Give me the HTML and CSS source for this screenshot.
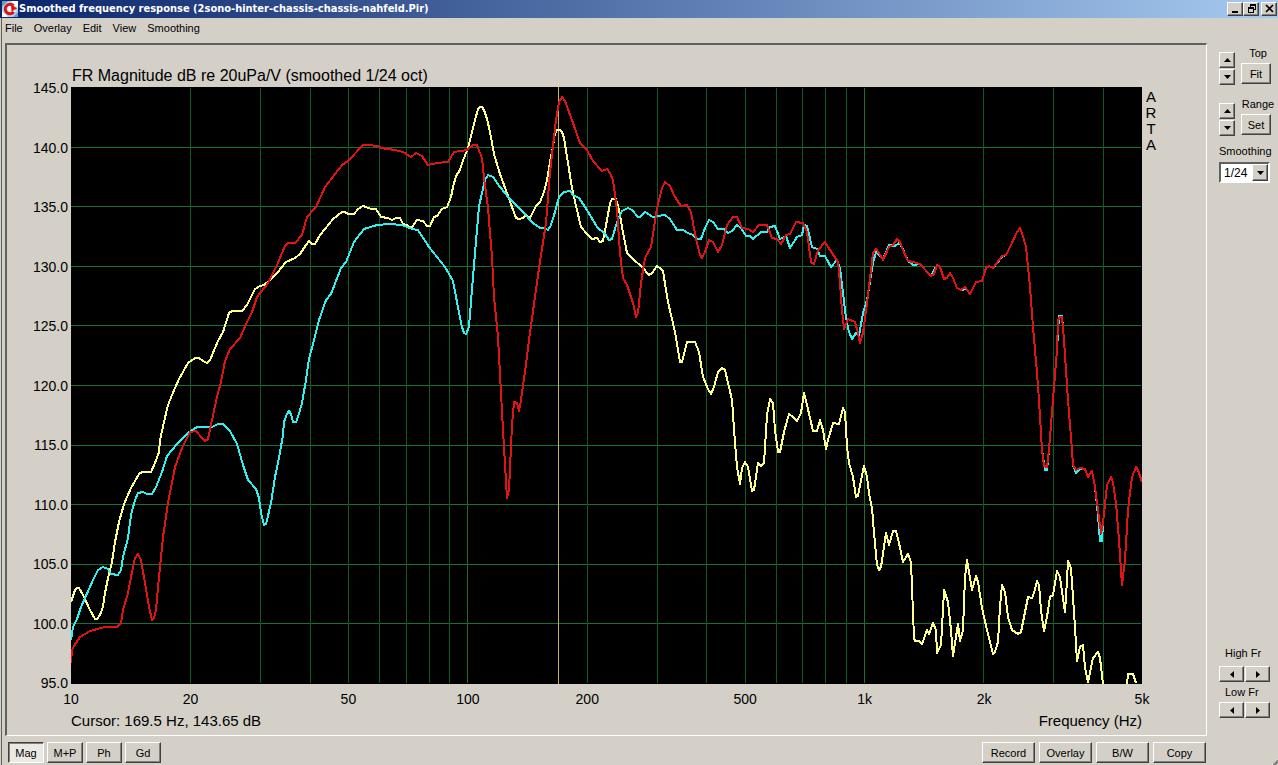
FILE: index.html
```html
<!DOCTYPE html>
<html lang="en">
<head>
<meta charset="utf-8">
<title>Smoothed frequency response</title>
<link rel="stylesheet" href="styles.css">
</head>
<body>
<div class="window">
  <header class="titlebar">
    <svg class="app-icon" viewBox="0 0 16 16" aria-hidden="true">
      <rect width="16" height="16" fill="#b4d4ec"/>
      <path d="M0 0h6L0 6zM16 16h-5l5-5z" fill="#5f9fc8"/>
      <path d="M9 0h7v7zM0 10v6h6z" fill="#fff"/>
      <circle cx="8" cy="8" r="6" fill="#e8eef4"/>
      <path d="M11.500 4.600A4.800 4.800 0 1 0 11.800 11" fill="none" stroke="#d81818" stroke-width="3"/>
      <path d="M9 3l6 4.500-5.500 3z" fill="#d81818"/>
      <path d="M7 6l2 2-2 2z" fill="#fff"/>
    </svg>
    <h1 class="caption">Smoothed frequency response (2sono-hinter-chassis-chassis-nahfeld.Pir)</h1>
    <div class="window-buttons">
      <button class="btn win-btn" aria-label="Minimize"><svg viewBox="0 0 11 10" shape-rendering="crispEdges"><path d="M2 7h6v2H2z"/></svg></button>
      <button class="btn win-btn" aria-label="Restore"><svg viewBox="0 0 11 10" shape-rendering="crispEdges"><path d="M4 0h6v6H8V5h1V2H5v1H4zM2 3h6v6H2zM3 5v3h4V5z" fill-rule="evenodd"/></svg></button>
      <button class="btn win-btn close" aria-label="Close"><svg viewBox="0 0 11 10"><path d="M2 1l7 7M9 1L2 8" stroke="#000" stroke-width="1.700"/></svg></button>
    </div>
  </header>
  <nav class="menu">
    <button>File</button><button>Overlay</button><button>Edit</button><button>View</button><button>Smoothing</button>
  </nav>
  <div class="workspace">
    <main class="left">
      <section class="panel">
        <h2 class="plot-title">FR Magnitude dB re 20uPa/V (smoothed 1/24 oct)</h2>
        <div class="y-axis">
          <span>145.0</span><span>140.0</span><span>135.0</span><span>130.0</span><span>125.0</span><span>120.0</span><span>115.0</span><span>110.0</span><span>105.0</span><span>100.0</span><span>95.0</span>
        </div>
        <div class="plot">
          <svg viewBox="71 87 1071 597" preserveAspectRatio="none" role="img" aria-label="Frequency response curves">
            <g class="grid" shape-rendering="crispEdges">
              <path d="M71 147.500H1141M71 206.500H1141M71 266.500H1141M71 325.500H1141M71 385.500H1141M71 445.500H1141M71 504.500H1141M71 564.500H1141M71 623.500H1141"/>
              <path class="minor" d="M190.500 88V683M260.500 88V683M310.500 88V683M348.500 88V683M379.500 88V683M406.500 88V683M429.500 88V683M449.500 88V683M587.500 88V683M657.500 88V683M706.500 88V683M745.500 88V683M776.500 88V683M802.500 88V683M825.500 88V683M846.500 88V683M983.500 88V683M1053.500 88V683M1103.500 88V683"/>
              <path d="M467.500 88V683M864.500 88V683"/>
            </g>
            <path class="cursor-line" shape-rendering="crispEdges" d="M558.500 87V684"/>
            <g class="curves" shape-rendering="crispEdges">
              <polyline class="yellow" points="71,602 75,590 77,588 79,588 83,595 90,610 95,619 97,619 100,615 103,607 105,593 108,578 112,562 115,542 119,522 124,504 131,488 139,474 142,472 151,472 155,463 159,452 160,440 164,422 168,405 172,395 179,379 188,363 195,358 199,358 203,361 207,363 210,360 218,341 223,332 229,313 232,311 242,311 247,305 255,289 260,286 264,285 270,280 277,273 286,262 295,258 300,254 306,245 309,241 312,244 315,244 320,235 325,229 333,219 342,212 345,212 348,214 354,214 358,209 363,206 366,207 371,209 376,209 381,217 388,218 392,220 396,218 400,218 403,224 407,225 409,227 412,227 417,220 423,221 427,226 430,226 434,217 437,216 442,209 447,207 451,197 453,187 456,176 460,170 462,163 468,148 472,132 475,120 478,109 480,107 482,107 484,110 487,119 490,132 494,154 500,174 508,196 512,207 516,218 519,219 523,218 526,215 530,218 536,206 540,202 544,192 547,180 550,162 553,147 555,133 557,130 560,130 562,132 564,138 568,163 572,188 576,206 581,227 587,234 592,239 597,238 600,242 603,241 607,220 610,203 612,199 616,199 619,210 622,227 627,253 633,259 642,267 649,275 652,273 657,266 661,269 663,271 668,302 675,332 680,362 682,362 687,342 695,342 699,352 703,377 708,389 711,394 714,387 718,372 722,368 725,370 729,387 732,400 735,443 737,467 740,484 742,468 745,462 748,467 752,491 754,490 758,463 761,466 764,463 767,415 770,399 773,403 775,430 778,452 780,452 784,432 789,414 793,417 797,421 801,413 804,393 807,405 813,431 817,431 820,420 823,430 826,449 828,440 833,423 839,424 843,408 845,412 847,447 849,463 853,477 856,497 858,496 861,480 864,466 867,477 869,493 872,508 874,533 877,565 879,570 881,567 886,533 889,545 893,531 896,531 899,543 903,562 908,554 911,562 914,638 915,641 919,641 922,644 927,630 929,634 933,623 936,630 937,653 941,645 943,610 944,590 948,602 951,630 953,656 958,624 960,641 963,630 965,577 967,560 972,590 976,576 978,582 982,608 987,630 993,654 995,652 998,642 1000,607 1002,585 1005,592 1008,617 1012,630 1018,634 1021,632 1023,622 1028,597 1032,598 1034,593 1037,581 1039,585 1041,610 1044,631 1047,617 1050,597 1053,595 1057,571 1060,577 1065,612 1066,597 1068,561 1071,568 1075,627 1077,661 1080,647 1083,645 1085,667 1088,682 1093,658 1098,652 1100,658 1103,684"/>
              <polyline class="yellow" points="1127,684 1128,674 1133,674 1136,683"/>
              <polyline class="cyan" points="71,640 73,627 77,619 81,607 93,580 98,570 103,567 108,569 111,574 118,575 121,570 123,557 128,538 131,515 135,500 138,493 143,492 147,494 152,494 156,487 162,472 167,456 177,444 188,433 197,427 212,427 218,424 223,424 230,431 237,444 243,465 248,480 256,489 259,498 261,513 264,525 266,524 271,503 275,477 279,458 283,435 284,422 287,414 289,411 291,414 293,422 296,422 298,417 302,403 306,380 309,359 313,344 319,320 326,300 331,294 341,268 346,262 354,242 364,229 377,225 390,224 402,225 412,229 418,230 429,247 445,267 453,281 457,302 462,327 464,333 466,334 469,327 473,277 479,206 485,180 488,175 493,177 500,187 509,198 520,209 533,223 540,228 544,228 548,230 551,225 555,212 559,197 564,192 570,191 573,195 579,198 587,210 597,227 605,234 609,240 612,239 617,222 622,211 628,208 632,210 638,217 640,217 645,212 653,217 657,216 665,215 670,219 677,230 683,230 688,233 693,235 697,239 701,239 705,228 709,220 713,222 718,229 724,229 728,233 732,231 737,225 741,228 746,236 750,236 753,239 761,232 767,232 770,227 775,226 780,239 786,236 790,248 797,237 802,235 804,225 807,226 812,247 817,249 820,256 825,256 831,267 837,260 840,268 843,293 846,318 849,332 852,339 856,333 859,336 863,313 867,300 873,263 876,252 879,255 883,259 889,245 895,246 899,243 902,247 908,261 913,265 920,264 931,276 937,265 940,267 944,279 947,278 950,273 953,278 957,288 961,290 966,289 970,294 976,282 982,281 986,268 989,266 993,268 1002,257 1006,255 1010,247 1017,232 1020,228 1022,233 1026,247 1030,287 1033,327 1037,373 1039,400 1042,450 1045,470 1047,470 1049,450 1053,400 1057,350 1059,316 1062,316 1064,340 1068,400 1072,450 1073,465 1076,473 1080,469 1085,469 1088,477 1092,471 1095,487 1098,515 1100,541 1102,541 1103,523 1107,485 1111,477 1113,482 1116,503 1119,540 1122,585 1125,560 1128,510 1132,477 1136,467 1138,470 1142,482"/>
              <polyline class="red" points="71,663 72,650 74,646 80,637 90,631 105,627 117,627 121,623 123,610 128,593 132,572 135,558 138,554 141,560 145,583 149,607 152,620 154,618 156,610 159,577 163,537 168,503 175,467 182,448 190,432 196,431 202,438 205,441 208,439 212,420 217,397 221,382 225,361 230,349 240,338 247,322 252,312 257,297 268,283 277,265 285,246 288,243 295,243 302,235 307,217 316,207 325,187 342,165 348,161 363,145 367,145 378,146 381,148 395,150 403,152 411,157 416,153 422,156 428,165 437,163 448,162 454,152 467,150 473,145 477,145 480,153 482,158 484,178 488,208 492,257 494,297 498,337 503,430 507,498 509,490 512,425 514,402 517,403 519,411 521,400 525,372 529,340 539,268 546,223 550,172 556,120 559,102 562,97 565,101 573,123 580,143 587,150 593,161 602,171 607,169 610,173 613,180 617,210 620,253 623,278 627,285 633,303 636,317 638,313 641,283 645,258 651,247 657,208 662,188 665,182 670,186 675,197 681,206 687,205 691,212 693,223 697,243 700,255 702,258 705,252 709,240 713,242 718,252 722,245 727,225 733,217 737,217 742,228 748,229 753,232 759,225 767,225 772,238 777,239 781,244 786,235 790,234 796,222 803,223 807,232 811,262 814,264 818,250 825,242 828,247 838,262 840,283 842,310 844,329 848,319 855,322 858,333 860,343 863,333 867,303 871,270 873,253 876,249 879,253 883,260 889,247 893,245 897,239 900,242 903,250 908,261 913,262 920,264 931,276 934,274 937,265 940,267 944,279 947,278 950,273 953,278 957,288 961,290 965,287 970,294 976,282 982,281 986,268 989,266 993,268 1002,256 1006,255 1010,247 1017,232 1020,228 1022,233 1026,247 1030,287 1033,327 1037,373 1039,400 1042,450 1044,466 1047,467 1049,450 1053,400 1057,350 1058,320 1060,317 1062,317 1064,340 1068,400 1072,450 1073,465 1076,470 1080,468 1085,469 1088,477 1092,471 1095,487 1098,510 1101,533 1103,523 1107,485 1111,477 1113,482 1116,503 1119,540 1122,585 1125,560 1128,510 1132,477 1136,467 1138,470 1142,482"/>
            </g>
          </svg>
        </div>
        <div class="brand"><span>A</span><span>R</span><span>T</span><span>A</span></div>
        <div class="x-axis">
          <span class="tick">10</span><i class="octave"></i><span class="tick">20</span><i class="wide-step"></i><span class="tick">50</span><i class="octave"></i><span class="tick">100</span><i class="octave"></i><span class="tick">200</span><i class="wide-step"></i><span class="tick">500</span><i class="octave"></i><span class="tick">1k</span><i class="octave"></i><span class="tick">2k</span><i class="wide-step"></i><span class="tick">5k</span>
        </div>
        <div class="readout"><span>Cursor: 169.5 Hz, 143.65 dB</span><span>Frequency (Hz)</span></div>
      </section>
      <footer class="toolbar">
        <div class="views">
          <button class="btn view pressed" aria-pressed="true">Mag</button>
          <button class="btn view">M+P</button>
          <button class="btn view">Ph</button>
          <button class="btn view">Gd</button>
        </div>
        <div class="actions">
          <button class="btn action">Record</button>
          <button class="btn action">Overlay</button>
          <button class="btn action">B/W</button>
          <button class="btn action">Copy</button>
        </div>
      </footer>
    </main>
    <aside class="side">
      <div class="side-top">
        <div class="control">
          <div class="spin">
            <button class="btn" aria-label="Top up"><svg viewBox="0 0 7 4"><path d="M0 4l3.500-4L7 4z"/></svg></button>
            <button class="btn" aria-label="Top down"><svg viewBox="0 0 7 4"><path d="M0 0h7L3.500 4z"/></svg></button>
          </div>
          <div class="named"><span>Top</span><button class="btn">Fit</button></div>
        </div>
        <div class="control">
          <div class="spin">
            <button class="btn" aria-label="Range up"><svg viewBox="0 0 7 4"><path d="M0 4l3.500-4L7 4z"/></svg></button>
            <button class="btn" aria-label="Range down"><svg viewBox="0 0 7 4"><path d="M0 0h7L3.500 4z"/></svg></button>
          </div>
          <div class="named"><span>Range</span><button class="btn">Set</button></div>
        </div>
        <label class="smooth-label" for="smoothing">Smoothing</label>
        <div class="combo">
          <select id="smoothing"><option>1/24</option><option>1/12</option><option>1/6</option><option>1/3</option></select>
          <span class="btn drop"><svg viewBox="0 0 7 4"><path d="M0 0h7L3.500 4z"/></svg></span>
        </div>
      </div>
      <div class="side-bottom">
        <span class="first">High Fr</span>
        <div class="pair">
          <button class="btn" aria-label="High Fr down"><svg viewBox="0 0 4 7"><path d="M4 0v7L0 3.500z"/></svg></button>
          <button class="btn" aria-label="High Fr up"><svg viewBox="0 0 4 7"><path d="M0 0v7l4-3.500z"/></svg></button>
        </div>
        <span>Low Fr</span>
        <div class="pair">
          <button class="btn" aria-label="Low Fr down"><svg viewBox="0 0 4 7"><path d="M4 0v7L0 3.500z"/></svg></button>
          <button class="btn" aria-label="Low Fr up"><svg viewBox="0 0 4 7"><path d="M0 0v7l4-3.500z"/></svg></button>
        </div>
      </div>
      <svg class="grip" viewBox="0 0 6 6" aria-hidden="true"><path d="M0 6l6-6" stroke="#fff"/><path d="M1 6l5-5M3 6l3-3" stroke="#808080" stroke-width="1.500"/></svg>
    </aside>
  </div>
</div>
</body>
</html>
```
FILE: styles.css
```css
* { box-sizing: border-box; }

body {
  margin: 0;
  background: #d4d0c8;
  color: #000;
  font: 11px/14px "Liberation Sans", Arial, sans-serif;
}

button, select { font: inherit; color: inherit; }

.window {
  display: flex;
  flex-direction: column;
  min-height: 100vh;
  box-shadow: inset 1px 0 #d4d0c8, inset 2px 0 #606060;
}

.btn {
  display: flex;
  align-items: center;
  justify-content: center;
  padding: 0;
  border: 1px solid;
  border-color: #fff #404040 #404040 #fff;
  background: #d4d0c8;
  box-shadow: inset -1px -1px #808080;
}

.titlebar {
  display: flex;
  align-items: center;
  height: 18px;
  padding: 0 1px 0 2px;
  background: linear-gradient(to right, #0a246a, #a6caf0);
}

.app-icon { width: 16px; height: 16px; margin-right: 1px; }

.caption {
  flex: 1;
  margin: 0;
  color: #fff;
  font: bold 11px/18px "DejaVu Sans Condensed", "DejaVu Sans", sans-serif;
  white-space: nowrap;
}

.window-buttons { display: flex; }
.win-btn { width: 16px; height: 14px; }
.win-btn svg { width: 11px; height: 10px; }
.close { margin-left: 2px; }

.menu {
  display: flex;
  gap: 11px;
  height: 25px;
  padding: 3px 5px;
}

.menu button {
  height: 14px;
  padding: 0;
  border: 0;
  background: none;
}

.workspace { display: flex; flex: 1; }

.left {
  display: flex;
  flex: 1;
  flex-direction: column;
  padding-left: 5px;
}

.panel {
  display: grid;
  flex: 1;
  grid-template-columns: 64px 1fr 64px;
  grid-template-rows: 42px 1fr 24px 27px;
  border: 2px solid;
  border-color: #606060 #fff #fff #606060;
  border-right-width: 1px;
  border-bottom-width: 1px;
  font-size: 14px;
  line-height: 18px;
}

.plot-title {
  grid-column: 2;
  margin: 0;
  padding: 22px 1px 0;
  font-size: 16px;
  font-weight: normal;
  line-height: 18px;
  white-space: nowrap;
}

.y-axis {
  display: flex;
  grid-row: 2;
  grid-column: 1;
  flex-direction: column;
  justify-content: space-between;
  margin: -8px 0;
  padding-right: 3px;
  text-align: right;
}

.plot {
  display: grid;
  grid-row: 2;
  grid-column: 2;
  min-height: 0;
  background: #000;
}

.plot svg { width: 100%; height: 100%; min-height: 0; contain: size; }
.plot path, .plot polyline { fill: none; vector-effect: non-scaling-stroke; }
.grid path { stroke: #17702f; }
.grid .minor { stroke: #115a24; }
.cursor-line { stroke: #c4b848; }
.curves polyline { stroke-width: 2px; stroke-linejoin: round; }
.curves .yellow { stroke: #ffff90; }
.curves .cyan { stroke: #30f0f0; }
.curves .red { stroke: #e01414; }

.brand {
  display: flex;
  grid-row: 2;
  grid-column: 3;
  flex-direction: column;
  width: 18px;
  padding-top: 2px;
  font-size: 15px;
  line-height: 16px;
  text-align: center;
}

.x-axis {
  display: flex;
  grid-row: 3;
  grid-column: 2;
  padding-top: 6px;
}

.tick { display: flex; justify-content: center; width: 0; }
.octave { flex: 301; }
.wide-step { flex: 398; }

.readout {
  display: flex;
  grid-row: 4;
  grid-column: 2;
  justify-content: space-between;
  padding-top: 4px;
  font-size: 15px;
}

.toolbar {
  display: flex;
  justify-content: space-between;
  padding: 6px 1px 2px 3px;
}

.views { display: flex; gap: 3px; }
.actions { display: flex; gap: 4px; }
.view { width: 36px; height: 21px; }
.action { width: 53px; height: 21px; }

.pressed {
  border-color: #404040 #fff #fff #404040;
  background: #ebe9e4;
  box-shadow: inset 1px 1px #808080;
}

.side {
  position: relative;
  display: flex;
  flex-direction: column;
  justify-content: space-between;
  width: 71px;
  padding: 3px 0 47px 12px;
}

.control { display: flex; gap: 6px; margin-bottom: 12px; }
.spin { display: grid; gap: 1px; padding-top: 6px; }
.spin .btn { width: 16px; height: 16px; }
.spin svg, .drop svg { width: 7px; height: 4px; }
.named { display: flex; flex-direction: column; align-items: center; gap: 3px; width: 34px; }
.named .btn { width: 30px; height: 21px; margin-right: 4px; }
.control + .control { margin-bottom: 8px; }

.smooth-label { display: block; margin-bottom: 4px; }

.combo { position: relative; width: 51px; height: 21px; }

.combo select {
  width: 100%;
  height: 100%;
  padding: 0 3px;
  appearance: none;
  border: 2px solid;
  border-color: #606060 #fff #fff #606060;
  border-radius: 0;
  background: #fff;
  font-size: 12px;
}

.drop {
  position: absolute;
  top: 2px;
  right: 2px;
  bottom: 2px;
  width: 16px;
  pointer-events: none;
}

.side-bottom { display: grid; gap: 3px; width: 51px; }
.side-bottom span { padding-left: 6px; }
.side-bottom .first { padding-bottom: 3px; }
.pair { display: flex; gap: 1px; }
.pair .btn { width: 25px; height: 16px; }
.pair svg { width: 4px; height: 7px; }

.grip { position: absolute; right: 0; bottom: 0; width: 6px; height: 6px; }
```
